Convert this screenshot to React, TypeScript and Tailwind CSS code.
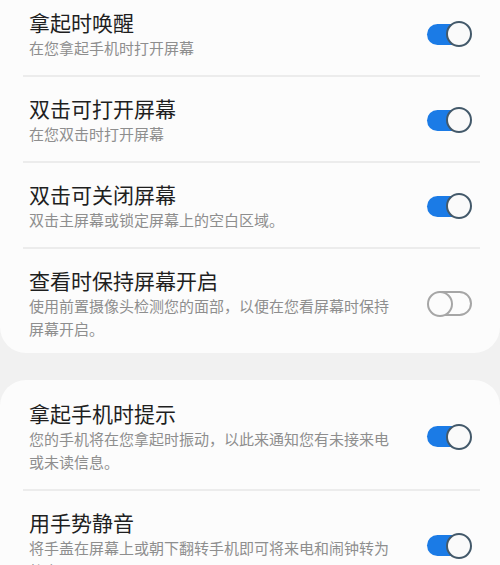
import React from 'react';

type Item = {
  title: string;
  desc: string;
  on: boolean;
};

const groupOne: Item[] = [
  { title: '拿起时唤醒', desc: '在您拿起手机时打开屏幕', on: true },
  { title: '双击可打开屏幕', desc: '在您双击时打开屏幕', on: true },
  { title: '双击可关闭屏幕', desc: '双击主屏幕或锁定屏幕上的空白区域。', on: true },
  {
    title: '查看时保持屏幕开启',
    desc: '使用前置摄像头检测您的面部，以便在您看屏幕时保持屏幕开启。',
    on: false,
  },
];

const groupTwo: Item[] = [
  {
    title: '拿起手机时提示',
    desc: '您的手机将在您拿起时振动，以此来通知您有未接来电或未读信息。',
    on: true,
  },
  {
    title: '用手势静音',
    desc: '将手盖在屏幕上或朝下翻转手机即可将来电和闹钟转为静音。',
    on: true,
  },
];

const Toggle: React.FC<{ on: boolean }> = ({ on }) => {
  if (on) {
    return (
      <div className="relative w-[45px] h-[28px] flex items-center shrink-0">
        <div className="w-[40px] h-[21px] rounded-full bg-[#1b7be6]" />
        {/* knob sits over the track */}
        <div className="absolute right-0 top-px w-[26px] h-[26px] rounded-full border-2 border-[#43596a] bg-[#fafafa]" />
      </div>
    );
  }
  return (
    <div className="relative w-[45px] h-[28px] flex items-center justify-end shrink-0">
      <div className="w-[42px] h-[25px] rounded-full border-2 border-[#a6a6a6]" />
      <div className="absolute left-0 top-px w-[26px] h-[26px] rounded-full border-2 border-[#a6a6a6] bg-[#fcfcfc]" />
    </div>
  );
};

const Row: React.FC<{ item: Item; last?: boolean }> = ({ item, last }) => (
  <div className={`flex items-center pl-[29px] pr-[28px] pt-[18px] ${last ? 'pb-[13px]' : 'pb-[16px]'}`}>
    <div className="w-[366px]">
      <div className="text-[21px] leading-[26px] text-[#1f1f1f]">{item.title}</div>
      <div className="text-[15px] leading-[23px] text-[#8e8e8e] mt-px">{item.desc}</div>
    </div>
    <div className="ml-auto">
      <Toggle on={item.on} />
    </div>
  </div>
);

const Divider: React.FC = () => <div className="ml-[23px] mr-[20px] h-[2px] bg-[#ececec]" />;

const Group: React.FC<{ items: Item[]; className: string }> = ({ items, className }) => (
  <section className={`bg-[#fcfcfc] ${className}`}>
    {items.map((item, i) => (
      <div key={item.title}>
        {i > 0 && <Divider />}
        <Row item={item} last={i === items.length - 1} />
      </div>
    ))}
  </section>
);

const App: React.FC = () => {
  return (
    <div
      className="w-[500px] h-[565px] overflow-hidden bg-[#f1f1f1]"
      style={{ fontFamily: '"Noto Sans CJK SC", "Noto Sans", sans-serif' }}
    >
      {/* page is scrolled a little, so the first card starts above the top */}
      <div className="-mt-[9px]">
        <Group items={groupOne} className="rounded-b-[26px]" />
        <div className="h-[27px]" />
        <Group items={groupTwo} className="rounded-t-[26px] pt-[2px]" />
      </div>
    </div>
  );
};

export default App;
